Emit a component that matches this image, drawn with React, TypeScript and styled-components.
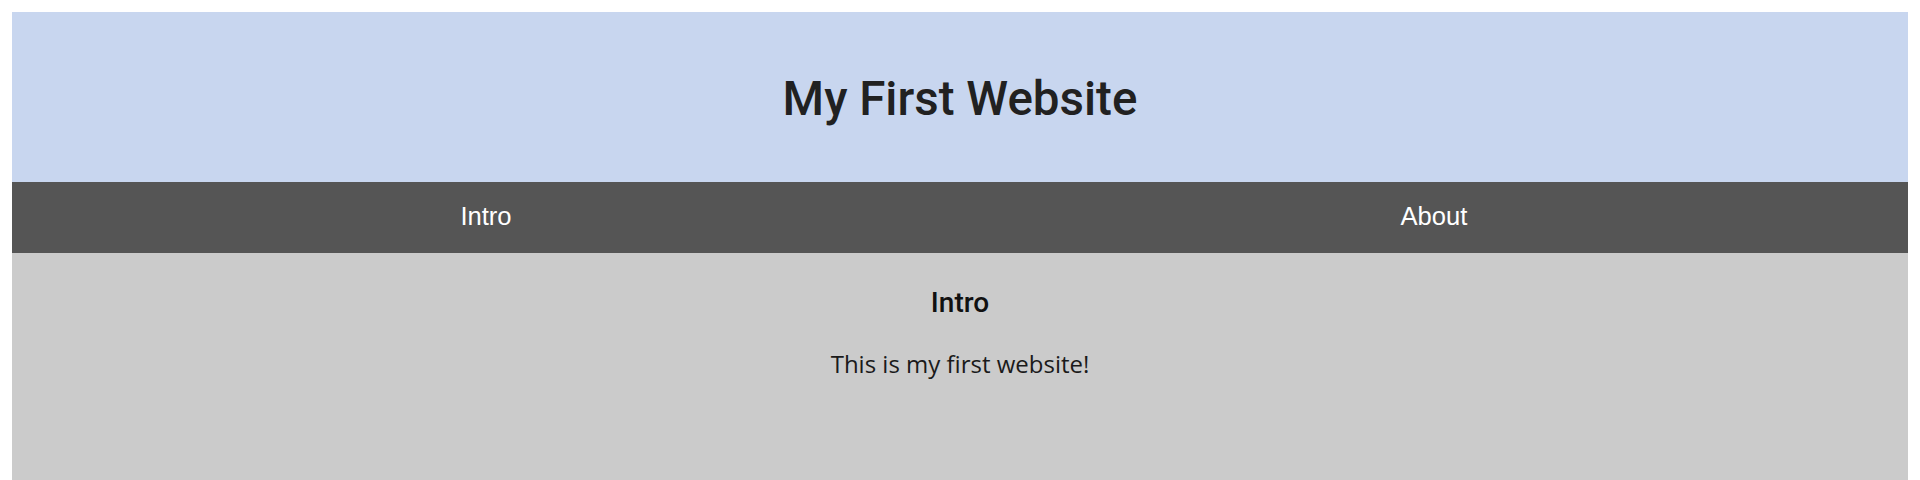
import React from "react";
import styled, { createGlobalStyle } from "styled-components";

const Global = createGlobalStyle`
  html, body { margin: 0; padding: 0; background: #ffffff; }
  body { padding: 12px; }
`;

const Page = styled.div`
  display: flex;
  flex-direction: column;
`;

const Header = styled.header`
  box-sizing: border-box;
  height: 170px;
  padding-top: 3px;
  background: #c8d6ef;
  display: flex;
  align-items: center;
  justify-content: center;
`;

const Title = styled.h1`
  margin: 0;
  font-family: Roboto, "Liberation Sans", sans-serif;
  font-weight: 500;
  font-size: 47.5px;
  color: #212121;
`;

const Nav = styled.nav`
  height: 71px;
  background: #555555;
  display: grid;
  grid-template-columns: 1fr 1fr;
`;

const NavItem = styled.a`
  display: flex;
  align-items: center;
  justify-content: center;
  padding-bottom: 2px;
  font-family: "Liberation Sans", Arial, sans-serif;
  font-size: 25.6px;
  color: #ffffff;
  text-decoration: none;
`;

const Content = styled.main`
  background: #cbcbcb;
  min-height: 300px;
  display: flex;
  flex-direction: column;
  align-items: center;
  padding-top: 33px;
`;

const SectionTitle = styled.h2`
  margin: 0;
  font-family: Roboto, "Liberation Sans", sans-serif;
  font-weight: 500;
  font-size: 28px;
  color: #111111;
`;

const Text = styled.p`
  margin: 28px 0 0;
  font-family: "Open Sans", sans-serif;
  font-size: 24px;
  color: #1a1a1a;
`;

export default function App() {
  return (
    <>
      <Global />
      <Page>
        <Header>
          <Title>My First Website</Title>
        </Header>
        <Nav>
          <NavItem href="#intro">Intro</NavItem>
          <NavItem href="#about">About</NavItem>
        </Nav>
        <Content>
          <SectionTitle>Intro</SectionTitle>
          <Text>This is my first website!</Text>
        </Content>
      </Page>
    </>
  );
}
